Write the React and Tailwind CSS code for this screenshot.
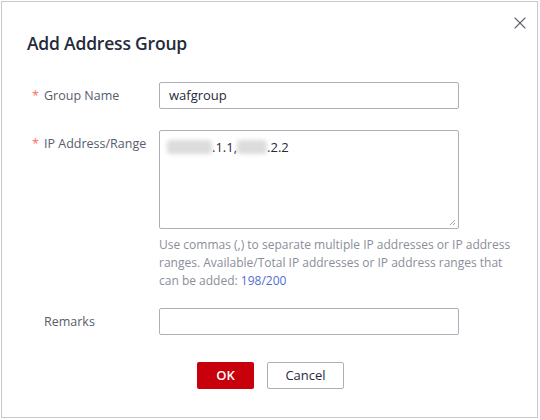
import { X } from 'lucide-react';

const font = { fontFamily: '"Open Sans", "Noto Sans", sans-serif' };

const Label = ({ required, children }) => (
    <div className="w-[157px] h-[27px] shrink-0 pl-[30px] pt-[2px] flex items-center whitespace-nowrap text-[12.5px] text-[#575d6c]">
        <span className={`w-[12px] text-[#f66f6a] ${required ? '' : 'invisible'}`}>*</span>
        <span>{children}</span>
    </div>
);

const Blur = ({ w }) => (
    <span className="inline-block align-middle h-[14px] bg-[#dcdcdc] blur-[2px] rounded-sm" style={{ width: w }} />
);

export default function App() {
    return (
        <div className="w-[540px] h-[420px] bg-white pt-px pl-px" style={font}>
            <div className="relative w-[537px] h-[417px] border border-[#c8c8c8]">
                <button className="absolute right-[7px] top-[11px] text-[#5e6370]">
                    <X size={20} strokeWidth={1.3} />
                </button>

                <h2 className="pl-[25px] pt-[28px] text-[17.5px] leading-[26px] font-semibold tracking-[-0.2px] text-[#252b3a]">
                    Add Address Group
                </h2>

                <div className="mt-[26px] flex items-center h-[27px]">
                    <Label required>Group Name</Label>
                    <div className="w-[300px] h-[27px] border border-[#adb0b8] rounded-[2px] px-[9px] flex items-center text-[13px] text-[#252b3a]">
                        wafgroup
                    </div>
                </div>

                <div className="mt-[21px] flex items-start">
                    <Label required>IP Address/Range</Label>
                    <div className="w-[300px]">
                        <div className="relative h-[99px] border border-[#adb0b8] rounded-[2px] px-[7px] pt-[4px] text-[13px] leading-[20px] text-[#252b3a]">
                            <Blur w="45px" />
                            <span className="align-middle">.1.1,</span>
                            <Blur w="30px" />
                            <span className="align-middle">.2.2</span>
                            <svg className="absolute right-[2px] bottom-[2px]" width="7" height="7" viewBox="0 0 7 7">
                                <path d="M6 1 L1 6 M6 4 L4 6" stroke="#a0a3aa" strokeWidth="1" />
                            </svg>
                        </div>
                        <p className="mt-[7px] w-[360px] text-[12px] leading-[18px] text-[#8a8e99]">
                            Use commas (,) to separate multiple IP addresses or IP address ranges. Available/Total IP addresses or IP address ranges that can be added: <span className="text-[#526ecc]">198/200</span>
                        </p>
                    </div>
                </div>

                <div className="mt-[18px] flex items-center h-[27px]">
                    <Label>Remarks</Label>
                    <div className="w-[300px] h-[27px] border border-[#adb0b8] rounded-[2px]" />
                </div>

                <div className="mt-[27px] flex justify-center gap-[13px] pl-[2px]">
                    <button className="w-[57px] h-[27px] bg-[#c7000b] rounded-[2px] text-white text-[13px] font-semibold">
                        OK
                    </button>
                    <button className="w-[77px] h-[27px] border border-[#adb0b8] rounded-[2px] text-[#252b3a] text-[13px]">
                        Cancel
                    </button>
                </div>
            </div>
        </div>
    );
}
